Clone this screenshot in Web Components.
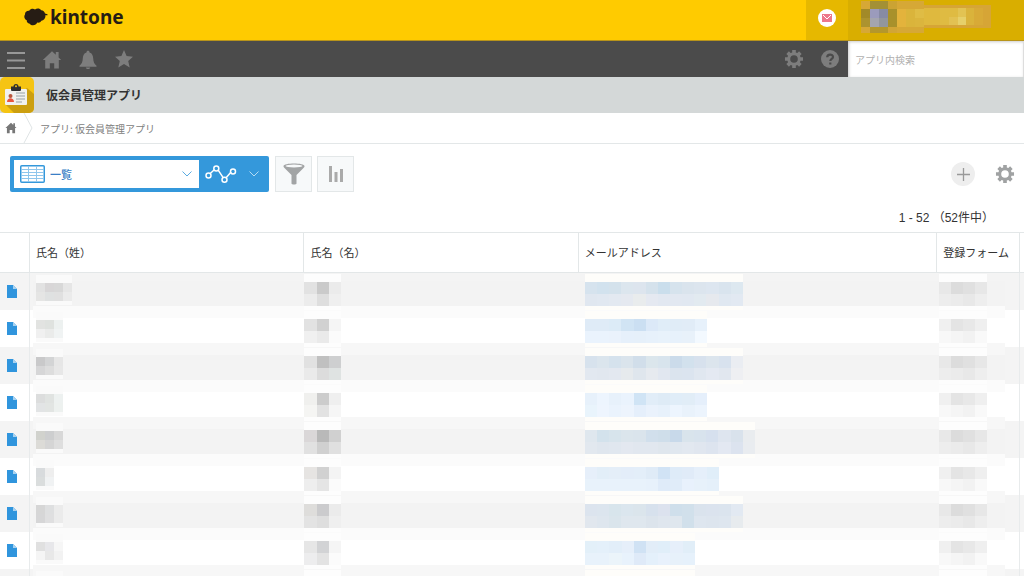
<!DOCTYPE html>
<html lang="ja">
<head>
<meta charset="utf-8">
<meta name="viewport" content="width=device-width, initial-scale=1">
<title>仮会員管理アプリ - kintone</title>
<style>
  html, body { margin: 0; height: 100%; overflow: hidden; background: #fff; }
  body { font-family: "Noto Sans CJK JP", "Noto Sans", sans-serif; font-size: 11px; color: #333; }
</style>
</head>
<body>
<kintone-page></kintone-page>

<script>
const define = (name, html, setup) => {
  const template = document.createElement('template');
  template.innerHTML = html;
  customElements.define(name, class extends HTMLElement {
    constructor() {
      super();
      this.attachShadow({ mode: 'open' }).append(template.content.cloneNode(true));
    }
    connectedCallback() { if (setup) setup(this, this.shadowRoot); }
  });
};

const reset = `:host,*{box-sizing:border-box} button,input,select{font:inherit;color:inherit;margin:0;padding:0;border:0;background:none;outline:0} svg{display:block}`;

const GEAR = (() => {
  const p = [], n = 8;
  for (let i = 0; i < n; i++) {
    const a = i * Math.PI * 2 / n;
    [[-0.27, 6.8], [-0.2, 9.2], [0.2, 9.2], [0.27, 6.8]].forEach(([d, r]) =>
      p.push((10 + r * Math.sin(a + d)).toFixed(2) + ' ' + (10 - r * Math.cos(a + d)).toFixed(2)));
  }
  return `M${p.join('L')}Z M10 6.2a3.8 3.8 0 1 0 0 7.6a3.8 3.8 0 1 0 0-7.6Z`;
})();
const HOME = 'M10 1.2L.8 10h2.4v8.6h4.6v-5.4h4.4v5.4h4.6V10h2.4l-2.6-2.6V2h-2.8v2.8Z';

/* Blurred-out cell content: colour blocks on an even grid. */
define('pixel-mosaic', `<style>
  :host{display:grid;grid-auto-rows:var(--block,12px);box-shadow:0 -8px var(--halo,transparent),0 4px var(--halo,transparent)}
</style>`, (host, root) => {
  const rows = host.getAttribute('colors').split('/').map(r => r.trim().split(/\s+/));
  host.style.width = host.getAttribute('span') + 'px';
  host.style.gridTemplateColumns = `repeat(${rows[0].length}, 1fr)`;
  rows.flat().forEach(c => {
    const b = document.createElement('span');
    b.style.background = '#' + c;
    root.append(b);
  });
});

define('top-bar', `<style>${reset}
  :host{display:flex;height:41px;background:#ffcb00;border-bottom:1px solid #b8941a}
  .logo{display:flex;align-items:center;gap:2px;padding:0 0 7px 24px;color:#261c14;text-decoration:none;font:700 19px/32px "Noto Sans",sans-serif}
  .note{margin-left:auto;width:42px;background:#e6b800;display:grid;place-items:center;padding-bottom:4px}
  .user{width:176px;background:#d9ae00;padding:1px 0 0 13px;display:flex;align-items:flex-start}
</style>
<a class="logo" href="#"><svg width="24" height="20" viewBox="0 0 24 20"><path fill="#261c14" d="M23.500 8.200L21.300 8.200C22 11 20 13.400 17.400 13.800C16.600 15.400 15 16 13.400 15.600C12 18.400 7.800 19.400 5.300 16.400C3.600 16.300 2.500 14.800 2.800 13.200C.4 12.400-.4 9.600 1 7.600C.8 5 2.800 3.400 5.200 3.700C6.600 1.700 9.400 1.300 11 2.600C13 .8 16 1.300 17.200 3.200C19.200 3.300 20.600 4.500 21 6.400L23.500 7.300Z"/></svg>kintone</a>
<button class="note" aria-label="通知"><svg width="18" height="18" viewBox="0 0 18 18"><circle cx="9" cy="9" r="9" fill="#fff"/><path fill="#ed788b" d="M4 5h10v8H4Z"/><path d="M5 6l4 4 4-4" fill="none" stroke="#fff" stroke-width="1"/></svg></button>
<button class="user" aria-label="ユーザー"><svg width="130" height="33" viewBox="0 0 130 33" shape-rendering="crispEdges"></svg></button>`,
(host, root) => {
  const svg = root.querySelector('.user svg');
  [[0,0,63,32,'d6a836'],[9,0,18,8,'a39035'],[27,0,9,8,'cba333'],[27,26,9,6,'d1a536'],[9,26,18,6,'b4972c'],
   [63,4,67,23,'d6a536'],[0,8,9,9,'a28a28'],[0,17,9,9,'ac932f'],[9,8,9,9,'9b9bbc'],[18,8,9,9,'878ba4'],
   [9,17,9,9,'a4a5ae'],[18,17,9,9,'92969d'],[27,8,9,18,'a8912b'],[36,8,9,18,'e3b33c'],[45,8,9,18,'dab43b'],
   [54,8,9,9,'dfbc45'],[54,17,9,9,'dbb53d'],[63,7,16,17,'dfb93e'],[79,7,18,17,'dfbb42'],[88,16,9,8,'e2c152'],
   [97,7,8,9,'e2c353'],[97,16,8,8,'e6d06a'],[105,7,8,17,'dab33b'],[113,7,9,17,'d8aa37']]
    .forEach(([x, y, w, h, c]) => {
      const r = document.createElementNS('http://www.w3.org/2000/svg', 'rect');
      Object.entries({ x, y, width: w, height: h, fill: '#' + c }).forEach(e => r.setAttribute(...e));
      svg.append(r);
    });
});

define('nav-bar', `<style>${reset}
  :host{display:flex;height:36px;background:#4b4b4b;color:#7d7d7d}
  button{width:36px;height:36px;display:grid;place-items:center;padding-top:2px}
  .menu{width:34px}
  .right{margin-left:auto}
  .right,.right+button{padding:0}
  label{width:176px;background:#fff;box-shadow:inset 1px 1px 3px #ccc;display:flex;border-right:1px solid #ddd}
  input{width:100%;padding:0 7px;font-size:10px}
  input::placeholder{color:#b0b0b0;opacity:1}
</style>
<button class="menu" aria-label="メニュー"><svg width="34" height="20" viewBox="0 0 34 20"><path d="M7 3h18M7 10.500h18M7 18h18" stroke="#989898" stroke-width="2"/></svg></button>
<button aria-label="ホーム"><svg width="20" height="20" viewBox="0 0 20 20"><path fill="currentColor" d="${HOME}"/></svg></button>
<button aria-label="通知"><svg width="20" height="20" viewBox="0 0 20 20"><path fill="currentColor" d="M10 .8c1 0 1.500.7 1.500 1.600C14.200 3.200 15 5.500 15.200 8.300c.2 3.700 1 5.700 3.300 7.400v1H1.500v-1c2.300-1.700 3.100-3.700 3.300-7.400C5 5.500 5.800 3.200 8.500 2.400 8.500 1.500 9 .8 10 .8ZM7.800 17.400h4.400c-.3 1-1.100 1.600-2.200 1.600s-1.900-.6-2.200-1.600Z"/></svg></button>
<button aria-label="ブックマーク"><svg width="20" height="20" viewBox="0 0 20 20"><path fill="currentColor" d="M10 0l2.600 6.100 6.400.6-4.800 4.400 1.500 6.400L10 14.100 4.300 17.500l1.500-6.400L1 6.700l6.400-.6Z"/></svg></button>
<button class="right" aria-label="設定"><svg width="20" height="20" viewBox="0 0 20 20"><path fill="currentColor" fill-rule="evenodd" d="${GEAR}"/></svg></button>
<button aria-label="ヘルプ"><svg width="18" height="18" viewBox="0 0 18 18"><circle cx="9" cy="9" r="9" fill="currentColor"/><path d="M6.200 7.200C6.200 3.600 12 3.800 12 6.900c0 1.900-2.700 2-2.700 4M9.300 12.500v2" fill="none" stroke="#4b4b4b" stroke-width="2.200"/></svg></button>
<label><input type="text" placeholder="アプリ内検索" aria-label="アプリ内検索"></label>`);

define('app-title', `<style>${reset}
  :host{display:flex;height:36px;align-items:center;gap:12px;background:#d4d8d8}
  h1{margin:0;font-size:12px;line-height:20px;font-weight:700;color:#333}
</style>
<svg width="34" height="36" viewBox="0 0 34 36"><rect width="34" height="36" rx="5" fill="#f5c413"/><path d="M5 27l22-16 7 6v14a5 5 0 0 1-5 5H14Z" fill="#cc9f10"/><rect x="5" y="12" width="22" height="16" rx="1" fill="#f1f1ef"/><path d="M16 16h9M16 19h9M16 22h9M16 25h6" stroke="#b5bcc0" stroke-width="1.300"/><path d="M7 25c0-5 7-5 7 0Z" fill="#e9543f"/><circle cx="10.500" cy="19" r="2" fill="#b9583e"/><path d="M11 13V9.500h2.500a2.500 2.500 0 0 1 5 0H21V13a1 1 0 0 1-1 1h-8a1 1 0 0 1-1-1Z" fill="#2f2f30"/><circle cx="16" cy="9.300" r="1" fill="#f5c413"/></svg>
<h1><slot></slot></h1>`);

define('bread-crumb', `<style>${reset}
  :host{display:block;border-bottom:1px solid #e3e7e8}
  nav{display:flex;height:30px;align-items:center;font-size:10px;color:#808080}
  a{color:inherit;text-decoration:none}
  .home{padding-left:5px}
  .sep{margin:0 7px 0 6px}
</style>
<nav aria-label="パンくず"><a class="home" href="#" aria-label="ポータル"><svg width="12" height="12" viewBox="0 0 20 20"><path fill="#777" d="${HOME}"/></svg></a>
<svg class="sep" width="10" height="30" viewBox="0 0 10 30"><path d="M1 0l8 15-8 15" fill="none" stroke="#dfe4e5"/></svg>
<a href="#"><slot></slot></a></nav>`);

define('view-toolbar', `<style>${reset}
  :host{display:flex;align-items:center;padding:12px 9px 0 10px;height:48px}
  .group{display:flex;height:36px;width:259px;background:#3498db;border-radius:2px;padding:4px 0 4px 4px}
  .view{flex:1;display:flex;align-items:center;background:#fff;position:relative;color:#3a7fc6}
  .view>svg:first-child{position:absolute;left:6px;pointer-events:none}
  .view>svg:last-child{position:absolute;right:7px;pointer-events:none}
  select{appearance:none;width:100%;height:28px;padding:0 24px 0 36px;font-weight:500}
  .graph{width:70px;display:flex;align-items:center;padding-left:6px;gap:12px}
  .square{width:37px;height:36px;margin-left:6px;background:#f7f9fa;border:1px solid #e3e7e8;display:grid;place-items:center}
  .square+.square{margin-left:5px}
  .add{margin-left:auto;width:24px;height:24px;border-radius:50%;background:#eee;display:grid;place-items:center}
  .set{margin-left:20px}
</style>
<div class="group">
  <div class="view"><svg width="25" height="18" viewBox="0 0 25 18"><rect x=".75" y=".75" width="23.500" height="16.500" rx="1" fill="#fff" stroke="#3498db" stroke-width="1.500"/><path d="M1 4.500h23M1 7.500h23M1 10.500h23M1 13.500h23M8.500 1v16M16.500 1v16" stroke="#8fc6ec"/></svg>
  <select aria-label="一覧の選択"><option>一覧</option></select>
  <svg width="10" height="6" viewBox="0 0 10 6"><path d="M.5.5L5 5 9.500.5" fill="none" stroke="#5aabe1"/></svg></div>
  <button class="graph" aria-label="グラフ"><svg width="32" height="20" viewBox="0 0 32 20"><g fill="none" stroke="#fff" stroke-width="1.500"><path d="M5.200 9.500l4.100-3.800M13 5.800l5 7.600M21.300 13.500l4.800-5.600"/><circle cx="3.500" cy="11.500" r="2.500"/><circle cx="11.300" cy="4.500" r="2.500"/><circle cx="19.500" cy="15.800" r="2.500"/><circle cx="28" cy="7.500" r="2.500"/></g></svg><svg width="10" height="6" viewBox="0 0 10 6"><path d="M.5.5L5 5 9.500.5" fill="none" stroke="#b5dbf3"/></svg></button>
</div>
<button class="square" aria-label="絞り込む"><svg width="22" height="24" viewBox="0 0 22 24"><path d="M.5 4C.5 .6 21.500 .6 21.500 4c0 1-.4 1.600-1.500 2.500L13.500 13v8.500c0 1.400-5 1.400-5 0V13L2 6.500C.9 5.600.5 5 .5 4Z" fill="#a2a4a5"/><ellipse cx="11" cy="4" rx="8.500" ry="1.500" fill="#f7f9fa"/></svg></button>
<button class="square" aria-label="集計する"><svg width="16" height="18" viewBox="0 0 16 18"><path d="M1 1h3v16H1ZM6.500 7h3v10h-3ZM12 4h3v13h-3Z" fill="#aaa"/></svg></button>
<button class="add" aria-label="レコードを追加する"><svg width="13" height="13" viewBox="0 0 13 13"><path d="M6.500 0v13M0 6.500h13" stroke="#999" stroke-width="1.300"/></svg></button>
<button class="set" aria-label="アプリの設定"><svg width="20" height="20" viewBox="0 0 20 20"><path fill="#a0a2a3" fill-rule="evenodd" d="${GEAR}"/></svg></button>`);

define('record-table', `<style>${reset}
  :host{display:block}
  p{margin:0;padding:15px 30px 0 0;height:40px;font:12px/22px "Liberation Sans","Noto Sans CJK JP",sans-serif;text-align:right;white-space:pre}
  table{width:100%;border-collapse:separate;border-spacing:0;table-layout:fixed}
  th{height:41px;padding:0 0 2px 6px;text-align:left;font-weight:400;white-space:nowrap;border:solid #e3e7e8;border-width:1px 1px 1px 0}
  th:last-child{border-right:0}
  td{height:37px;padding:0;vertical-align:top}
  tr:nth-child(odd) td{background-color:#f4f4f4}
  td.px{background-image:linear-gradient(#fbfbfb 8px,#fff 8px 33px,#f7f7f7 33px);background-repeat:no-repeat}
  tr:nth-child(odd) td.px{background-image:linear-gradient(#f7f7f7 8px,#f3f3f3 8px 33px,#fbfbfb 33px)}
  tr:first-child td.px{background-image:linear-gradient(#f4f4f4 8px,#f3f3f3 8px 33px,#fbfbfb 33px)!important}
  td.name{background-position:right;background-size:calc(100% - 3px) 100%}
  td.form{background-size:calc(100% - 14px) 100%}
  td:first-child,td:nth-child(5){border-right:1px solid #e8ebec}
  td a{display:block;padding:12px 0 0 7px}
  pixel-mosaic{margin-top:9px;--halo:#fdfdfd}
  .name pixel-mosaic{--block:9px;--halo:#fafafa;margin:10px 0 0 6px}
  .mail pixel-mosaic{--halo:#fefdfa;margin-left:6px}
  .form pixel-mosaic{margin-left:2px}
  .c0{width:30px}.c1{width:26.8%}.c3{width:35%}.c4{width:83px}
</style>
<p>1 - 52 （52件中）</p>
<table><colgroup><col class="c0"><col class="c1"><col class="c1"><col class="c3"><col class="c4"><col></colgroup>
<thead><tr><th aria-label="詳細"></th><th>氏名（姓）</th><th>氏名（名）</th><th>メールアドレス</th><th>登録フォーム</th><th aria-label="操作"></th></tr></thead><tbody></tbody></table>`,
(host, root) => {
  const g = ['e8e8e8 dcdcdc e0e0e0 e7e7e7/ededed ebebeb e8e8e8 eeeeee', 'f0f0f0 e4e4e4 e8e8e8 efefef/f8f8f8 f5f5f5 f2f2f2 f9f9f9'];
  const data = [
    [36, 'e2e2e2 d8d6d7 d8d8d8 e6e6e6/e5e5e4 dfe1e1 e0e0e0 ebebeb', 'e2e2e2 cacaca ebebeb/ececec dedede efefef',
     158, 'd6e3ee d2e2ee d4e2ec dce6ee dde5ee d5e2ec cadeec d6e3ed dae4ed dce5ee dde6f0 d9e4ee dde8f0/e0e7f0 e1e8f1 e3e9f1 e5e9f0 e9eced e5e9f1 e2e8f1 e2e8f1 e1e8f1 e2eaf0 e6e9ee e0e8f1 e2e9f2'],
    [27, 'e2e3e1 dfe2df edf1f0/f0f0f0 eaebea f0f3f3', 'e2e2e2 d1d1d1 f5f5f5/f0f0f0 eaeaea fbfbfb',
     122, 'dfebf7 dfebf7 dcebf7 d1e4f4 cbdff2 dce9f8 e0edf8 e0ecf7 e1ecf7 e7f1fb/eaf3fd eaf3fd eaf2fc e6f0fb e6f0fa e7f1fb e8f2fb e7f1fb e8f1fa f3f9ff'],
    [27, 'c9c9ca d3d4d5 e6e6e6/d6d6d7 dddddd e7e7e7', 'e1e1e1 c0c0c0 cecfd0/eaeaea dcdcdc dfe3e2',
     158, 'd7e2ed dbe5ed d5e2ed dae4ec d1deea dbe6ec d8e4ed cbdbea d2e1ed d7e1ed dce5ed d8e2ee eaedf2/e2e8f0 e1e7ef e3e8f0 e6eaed dfe6ed e6eaef e1e7f0 dbe4ee dbe4ef e0e7f0 e4e9f2 e1e7ef eeeff2'],
    [27, 'dcdddd e0e3e1 edf1f0/e2e4e5 e2e5e3 edf1ef', 'f0f0ee cccccc efefef/f5f5f3 e2e2e2 f6f6f6',
     122, 'e7f1fb edf5fe e7f1fb eaf3fd d0e4f5 e1edf8 deebf6 e0edf8 e1edf7 e5effb/e9f4fc eef5fe eaf3fd edf4fd e5effb eaf2fc e7f1fb edf5fe e9f2fb ecf4fd'],
    [27, 'd1d2cd cdcecf d8d8d8/dcdbd7 d5d5d5 dedede', 'dad7d8 b9b9b9 d0d0d0/e1e1e1 d0d0d0 e0e0e0',
     170, 'dfe7ee d3e2ec d7e4ec dbe5ec dae4ec d1dfec cfdeea c8d9ea d9e4ec d8e3ed d6e0ee dee5ef d9e2ec e9ecef/e2e8ef dfe6ee e0e7ef e3e8f0 e1e7ef e1e7ef dfe6ed e0e7ef e2e8f0 e0e6ef dde4ef e3e8f2 dce3ef e9ecf0'],
    [18, 'd8dbdd eeeeee/dadddd f0f2f3', 'e6e4e2 d1d1d1 f4f4f4/eeeeee e5e5e5 fbfbfb',
     134, 'e6effa e2eef8 e4eef8 e3edf9 e3eef9 dfebf7 d1e3f5 deebf8 e0ebf8 e5effa e0eef9/e8f2fb e8f2fb e8f2fb e8f2fb e8f2fb e7f1fb dfebf9 e0ecf9 e8f1fc e7f1fa e5f0fa'],
    [27, 'd6d6d6 dedfe0 ebebeb/d6d6d7 dfdfe0 ebebeb', 'dedddb cbcbcd ebebeb/e3e3e3 dedede efefef',
     158, 'dce4ee dce5ee d8e5ec dbe6ee dbe5ec d7e1ed dce2ee cfdfeb d1e0eb dae3ed dbe3ee dbe4ee e2e9f2/e1e7ee dee6ee dae5ec dfe7ee dfe7ee dce4ec dfe6ee dfe7ee d1e0eb dee6ef dde5ee dee6ef e7ebee'],
    [27, 'e0e0e0 e7e7ea f6f6f6/f5f5f5 e8e8e8 f2f2f2', 'e6e6e6 d2d3d5 f5f5f5/ededee e3e3e3 fbfbfb',
     110, 'e3f0f9 e4f0fa e2eef9 e6effa d0e2f4 e2edf8 e0eef9 e6effa e1eef8/e8f2fb e8f2fb ebf4fa e8f2fc dfeaf8 e4f0fb e8f1fc e7f1fa e6f1fb'],
    [27, 'f4f4f4 f4f4f4 f4f4f4', 'f3f3f3 f3f3f3 f3f3f3', 110, 'f3f3f3']
  ];
  root.querySelector('tbody').innerHTML = data.map(([w, last, first, mw, mail], i) => `<tr>
    <td><a href="#" aria-label="レコードの詳細"><svg width="10" height="13" viewBox="0 0 10 13"><path d="M0 0h6l4 4v9H0Z" fill="#3095dd"/><path d="M6 0v4h4Z" fill="#a8d2f0"/></svg></a></td>
    <td class="px name"><pixel-mosaic span="${w}" colors="${last}"></pixel-mosaic></td>
    <td class="px"><pixel-mosaic span="37" colors="${first}"></pixel-mosaic></td>
    <td class="px mail"><pixel-mosaic span="${mw}" colors="${mail}"></pixel-mosaic></td>
    <td class="px form"><pixel-mosaic span="48" colors="${g[i % 2]}"></pixel-mosaic></td><td></td></tr>`).join('');
});

define('kintone-page', `<style>
  :host{display:flex;flex-direction:column;min-height:100%}
</style>
<top-bar></top-bar>
<nav-bar></nav-bar>
<app-title>仮会員管理アプリ</app-title>
<bread-crumb>アプリ: 仮会員管理アプリ</bread-crumb>
<view-toolbar></view-toolbar>
<record-table></record-table>`);
</script>
</body>
</html>
